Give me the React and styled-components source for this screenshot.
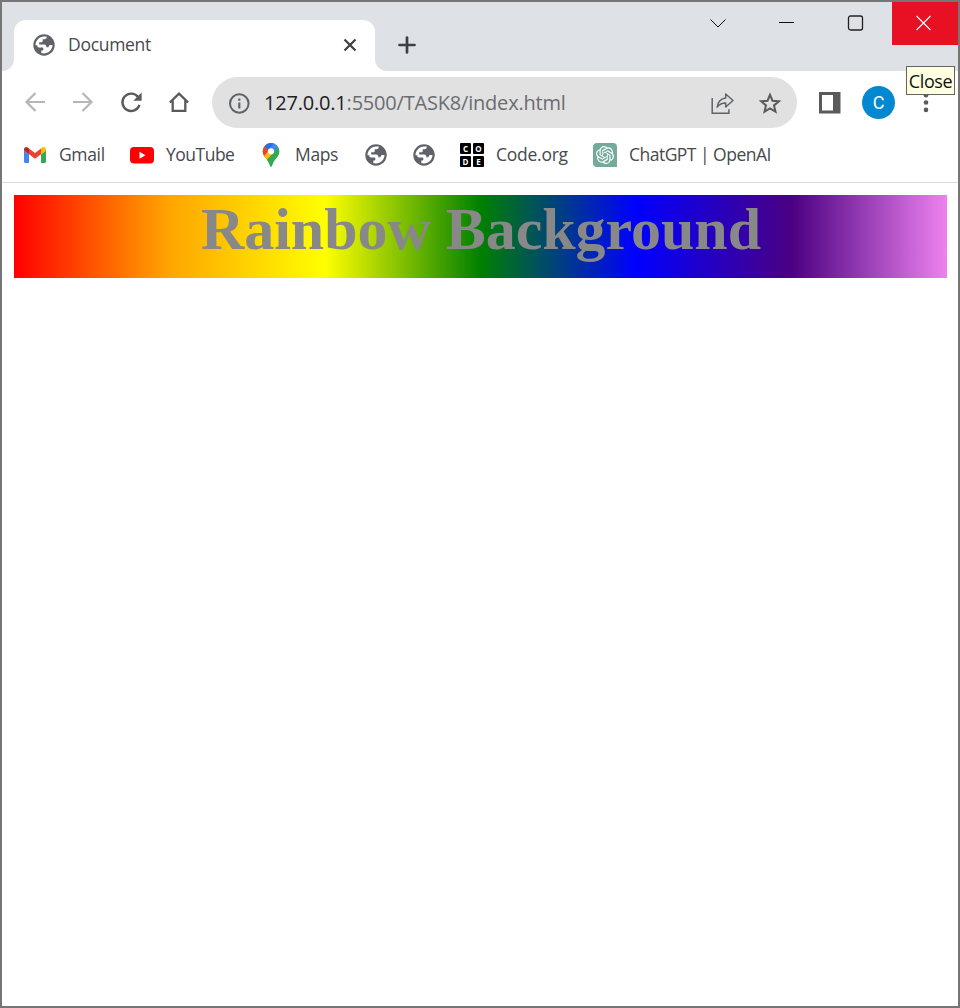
import React from "react";
import styled, { createGlobalStyle } from "styled-components";
import { SiOpenai } from "react-icons/si";

const Global = createGlobalStyle`
  * { box-sizing: border-box; }
  html, body { margin: 0; background: #fff; }
  body { font-family: "Open Sans", "Noto Sans", sans-serif; overflow: hidden; }
  svg { display: block; flex: none; }
`;

const Window = styled.div`
  position: relative;
  width: 960px;
  height: 1008px;
  border: 2px solid #767676;
  background: #fff;
  display: flex;
  flex-direction: column;
`;

const TabStrip = styled.header`
  height: 69px;
  flex: none;
  background: #dee1e6;
  display: flex;
  align-items: flex-start;
`;

const TabCurve = styled.div`
  width: 12px;
  height: 12px;
  align-self: flex-end;
  background: radial-gradient(circle at ${(p) => (p.$side === "left" ? "0 0" : "100% 0")}, #dee1e6 11.5px, #fff 12.5px);
`;

const Tab = styled.div`
  width: 361px;
  height: 51px;
  margin-top: 18px;
  padding: 0 16px 1px 18px;
  background: #fff;
  border-radius: 12px 12px 0 0;
  display: flex;
  align-items: center;
`;

const Label = styled.span`
  font-size: 17.5px;
  letter-spacing: ${(p) => p.$spacing || 0}px;
  line-height: 26px;
  color: #46494d;
  white-space: nowrap;
`;

const TabTitle = styled(Label)`
  flex: 1;
  margin: -2px 0 0 12px;
`;

const NewTab = styled.button`
  border: 0;
  background: none;
  padding: 0;
  margin: 33px 0 0 10px;
`;

const Controls = styled.div`
  margin-left: auto;
  display: flex;
`;

const Control = styled.button`
  width: ${(p) => (p.$danger ? 66 : 69)}px;
  height: 43px;
  padding: ${(p) => (p.$danger ? "0 2px 1px 0" : "0 4px 1px 0")};
  border: 0;
  background: ${(p) => (p.$danger ? "#e81123" : "transparent")};
  display: flex;
  align-items: center;
  justify-content: center;
`;

const Toolbar = styled.div`
  height: 63px;
  flex: none;
  display: flex;
  align-items: center;
  padding-left: 21px;
`;

const NavButtons = styled.nav`
  display: flex;
  gap: 24px;
  width: 189px;
  margin-bottom: 1px;
`;

const AddressBar = styled.div`
  width: 585px;
  height: 51px;
  border-radius: 26px;
  background: #e1e1e1;
  display: flex;
  align-items: center;
  padding: 0 15px;
`;

const Url = styled.span`
  flex: 1;
  margin-left: 13px;
  font-size: 20px;
  letter-spacing: -0.2px;
  color: #6a6d70;
  white-space: nowrap;
  b { font-weight: inherit; color: #202124; }
`;

const AddressActions = styled.div`
  display: flex;
  gap: 24px;
`;

const Actions = styled.div`
  display: flex;
  align-items: center;
  margin-left: 22px;
`;

const Avatar = styled.div`
  width: 33px;
  height: 33px;
  margin: 0 27px 0 21px;
  border-radius: 50%;
  background: #0288d1;
  color: #fff;
  font: 18px/33px Roboto, sans-serif;
  text-align: center;
`;

const Bookmarks = styled.div`
  height: 49px;
  flex: none;
  border-bottom: 1px solid #dadada;
  display: flex;
  align-items: flex-start;
  padding: 8px 0 0 21px;
`;

const Bookmark = styled.div`
  width: ${(p) => p.$width}px;
  height: 26px;
  display: flex;
  align-items: center;
  gap: ${(p) => p.$gap || 12}px;
  ${Label} { margin-top: -2px; }
`;

const ChatTile = styled.div`
  width: 24px;
  height: 24px;
  border-radius: 4px 4px 0 4px;
  background: #74aa9c;
  color: #fff;
  display: flex;
  align-items: center;
  justify-content: center;
`;

const CodeGrid = styled.div`
  display: grid;
  grid-template-columns: 11px 11px;
  gap: 2px;
`;

const CodeCell = styled.span`
  height: 11px;
  border-radius: 1px;
  background: #000;
  color: #fff;
  font: 700 8px/11px "Open Sans", sans-serif;
  text-align: center;
`;

const Page = styled.main`
  flex: 1;
  padding: 12px 11px 0 12px;
`;

const Banner = styled.h1`
  margin: 0;
  height: 83px;
  padding-left: 1px;
  background: linear-gradient(to right, red, orange, yellow, green, blue, indigo, violet);
  color: #888;
  text-align: center;
  letter-spacing: -0.04px;
  font: 700 60px/69px "Liberation Serif", serif;
`;

const Tooltip = styled.div`
  position: absolute;
  top: 64px;
  right: 3px;
  width: 49px;
  height: 29px;
  border: 1px solid #646464;
  background: #ffffe1;
  color: #111;
  font-size: 18px;
  line-height: 29px;
  letter-spacing: -0.4px;
  text-align: center;
`;

const Globe = () => (
  <svg width="24" height="24" viewBox="0 0 24 24">
    <circle cx="12" cy="12" r="10.7" fill="#5f6368" />
    <path fill="#fff" d="M3.500 12.200C3.500 7.600 7.300 3.600 12 3.500h2.800c0 1.900-.9 2.700-2.400 2.800h-1.700v1.500c0 1-.6 1.500-1.600 1.500H7.200v2.300H12c1.700 0 2.400 1 2.400 2.600h2.100c.2-1.600.9-2.200 2.100-2.200h1.900c-.1 4.700-3.900 8.500-8.500 8.500-1 0-1.900-.1-2.700-.4v-2.300c1.500-.1 2.100-.7 2.100-1.700 0-1.200-.5-1.500-1.600-1.500H7.500c-1.600 0-2.300-1-2.300-2.400z" />
  </svg>
);

const Arrow = ({ forward }) => (
  <svg width="24" height="24" viewBox="0 0 24 24" fill="none" stroke="#b6b6b6" strokeWidth="2.2">
    <path d={forward ? "M2 12h18M11.5 3l9 9-9 9" : "M22 12H4M12.500 3l-9 9 9 9"} />
  </svg>
);

const Reload = () => (
  <svg width="24" height="24" viewBox="0 0 24 24">
    <path d="M19.2 7.2A8.700 8.700 0 1 0 20.500 14.800" fill="none" stroke="#5a5a5a" strokeWidth="2.400" />
    <path d="M22.600 2.500v8.200h-8.300z" fill="#5a5a5a" />
  </svg>
);

const Home = () => (
  <svg width="24" height="24" viewBox="0 0 24 24" fill="none" stroke="#5a5a5a" strokeWidth="2.300">
    <path d="M2.800 12.500L12 3.600l9.200 8.900M5.700 10.500v10.300h12.600V10.500" />
  </svg>
);

const Info = () => (
  <svg width="24" height="24" viewBox="0 0 24 24">
    <circle cx="12.300" cy="12.500" r="9.300" fill="none" stroke="#5f6368" strokeWidth="2" />
    <path d="M11.200 7.500h2.200v2.200h-2.200zM11.200 11.500h2.200v6h-2.200z" fill="#5f6368" />
  </svg>
);

const Share = () => (
  <svg width="24" height="24" viewBox="0 0 24 24" fill="none" stroke="#5f6368" strokeWidth="1.500">
    <path d="M2.200 7v15.200h16.700v-4" />
    <path d="M15.700 3l7.300 6.500-7.300 6.500v-3.900c-3.700 0-6.300 1.200-8.500 4 .7-5.300 3.500-8.500 8.500-9.100z" strokeLinejoin="round" />
  </svg>
);

const Star = () => (
  <svg width="24" height="24" viewBox="0 0 24 24" fill="none" stroke="#5a5a5a" strokeWidth="2">
    <path d="M12 3.800l2.500 5.900 6.400.5-4.900 4.200 1.500 6.200-5.500-3.300-5.500 3.300L8 14.400l-4.900-4.200 6.400-.5z" />
  </svg>
);

const SidePanel = () => (
  <svg width="22" height="22" viewBox="0 0 22 22">
    <path fill="#5a5a5a" fillRule="evenodd" d="M0 0h21.500v21.500H0zM3 3v15.500h11V3z" />
  </svg>
);

const Dots = () => (
  <svg width="8" height="24" viewBox="0 0 8 24" fill="#5a5a5a">
    <circle cx="4" cy="4.200" r="2.300" /><circle cx="4" cy="11.500" r="2.300" /><circle cx="4" cy="18.900" r="2.300" />
  </svg>
);

const Gmail = () => (
  <svg width="24" height="24" viewBox="0 0 24 24">
    <path fill="#4285f4" d="M1 7.500l5 3.800V20H2.600Q1 20 1 18.400z" />
    <path fill="#34a853" d="M18 11.300l5-3.800v10.900q0 1.600-1.600 1.600H18z" />
    <path fill="#ea4335" d="M6 5.500l6 4.500 6-4.500v5.800l-6 4.500-6-4.500z" />
    <path fill="#c5221f" d="M1 6.500c0-2.300 2.200-3.100 3.800-1.900L6 5.500v5.800L1 7.500z" />
    <path fill="#fbbc04" d="M23 6.500c0-2.300-2.200-3.100-3.800-1.900l-1.200.9v5.800l5-3.800z" />
  </svg>
);

const YouTube = () => (
  <svg width="24" height="24" viewBox="0 0 24 24">
    <rect y="4" width="24" height="16.500" rx="4" fill="#f00" />
    <path d="M9.500 8.700v7l6-3.500z" fill="#fff" />
  </svg>
);

const Maps = () => (
  <svg width="18" height="24" viewBox="0 0 18 24">
    <clipPath id="pin"><path d="M9 0a8.300 8.300 0 0 1 8.300 8.300c0 5.700-5.500 7.200-7.300 14.500-.3 1.200-1.700 1.200-2 0C6.200 15.500.7 14 .7 8.300A8.300 8.300 0 0 1 9 0z" /></clipPath>
    <g clipPath="url(#pin)">
      <path fill="#34a853" d="M0 0h18v24H0z" />
      <path fill="#ea4335" d="M0 0h5l5 6-8.500 9.500L0 12z" />
      <path fill="#1a73e8" d="M2.500 3L8 8l5-7L8-1z" />
      <path fill="#fbbc04" d="M1.500 13.500L6 8.500l5.700 1.300-8 9z" />
      <path fill="#34a853" d="M16.200 4.200L4 18l5 6 9-12V6z" />
      <path fill="#4285f4" d="M11.700.5L7 6l5 3 4.800-5.500z" />
    </g>
    <circle cx="9" cy="8.300" r="3.100" fill="#fff" />
  </svg>
);

const Line = ({ d, color = "#111", width = 1 }) => (
  <svg width="18" height="18" viewBox="0 0 18 18" fill="none" stroke={color} strokeWidth={width}>
    <path d={d} />
  </svg>
);

export default function App() {
  return (
    <Window>
      <Global />
      <TabStrip>
        <TabCurve $side="left" />
        <Tab>
          <Globe />
          <TabTitle $spacing={-0.3}>Document</TabTitle>
          <Line d="M3.500 3.500l11 11M14.500 3.500l-11 11" color="#3c4043" width={2.2} />
        </Tab>
        <TabCurve $side="right" />
        <NewTab>
          <svg width="20" height="20" viewBox="0 0 20 20" stroke="#3c4043" strokeWidth="2.700" strokeLinecap="round">
            <path d="M10 2.500v15M2.500 10h15" />
          </svg>
        </NewTab>
        <Controls>
          <Control><Line d="M1.500 5.500L9 13l7.500-7.500" /></Control>
          <Control><Line d="M1 8.500h15" /></Control>
          <Control>
            <svg width="18" height="18" viewBox="0 0 18 18" fill="none" stroke="#222">
              <rect x="1.500" y="2" width="14" height="14" rx="2" strokeWidth="1.300" />
            </svg>
          </Control>
          <Control $danger><Line d="M1.500 2l14 14M15.500 2l-14 14" color="#fff" width={1.1} /></Control>
        </Controls>
      </TabStrip>
      <Toolbar>
        <NavButtons><Arrow /><Arrow forward /><Reload /><Home /></NavButtons>
        <AddressBar>
          <Info />
          <Url><b>127.0.0.1</b>:5500/TASK8/index.html</Url>
          <AddressActions><Share /><Star /></AddressActions>
        </AddressBar>
        <Actions><SidePanel /><Avatar>C</Avatar><Dots /></Actions>
      </Toolbar>
      <Bookmarks>
        <Bookmark $width={107}><Gmail /><Label $spacing={-0.35}>Gmail</Label></Bookmark>
        <Bookmark $width={132}><YouTube /><Label $spacing={-0.5}>YouTube</Label></Bookmark>
        <Bookmark $width={102} $gap={15}><Maps /><Label $spacing={-0.35}>Maps</Label></Bookmark>
        <Bookmark $width={48}><Globe /></Bookmark>
        <Bookmark $width={48}><Globe /></Bookmark>
        <Bookmark $width={133}>
          <CodeGrid>{["C", "O", "D", "E"].map((c) => <CodeCell key={c}>{c}</CodeCell>)}</CodeGrid>
          <Label $spacing={-0.25}>Code.org</Label>
        </Bookmark>
        <Bookmark $width={200}>
          <ChatTile><SiOpenai size={18} /></ChatTile>
          <Label $spacing={-0.52}>ChatGPT | OpenAI</Label>
        </Bookmark>
      </Bookmarks>
      <Page><Banner>Rainbow Background</Banner></Page>
      <Tooltip>Close</Tooltip>
    </Window>
  );
}
